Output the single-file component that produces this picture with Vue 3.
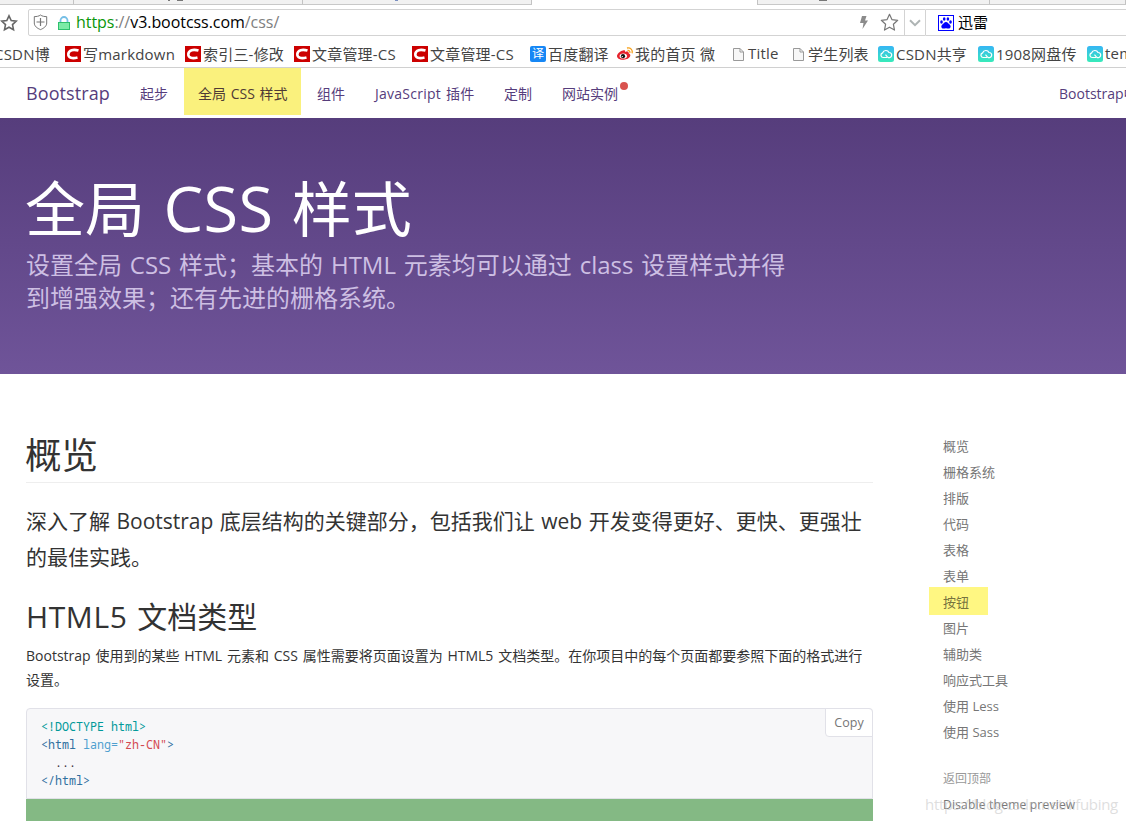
<template>
  <div class="window">
    <div class="tabs">
      <div class="tab"></div>
      <div class="tab"><i class="tail wide"></i><i class="tail bar"></i></div>
      <div class="tab"><i class="tail thin"></i></div>
      <div class="tab active"></div>
      <div class="tab"><i class="tail dash"></i></div>
      <div class="tab"></div>
    </div>

    <div class="address">
      <svg class="fav" width="18" height="18" viewBox="0 0 18 18">
        <path d="M9 1.8l2.200 4.700 5.100.6-3.800 3.500 1 5.100L9 13.200l-4.500 2.500 1-5.100L1.700 7.100l5.100-.6z" fill="none" stroke="#666" stroke-width="1.600" />
      </svg>
      <div class="url-box">
        <svg class="shield" width="15" height="17" viewBox="0 0 15 17">
          <path d="M7.500 1C5.800 2.300 3.600 2.600 1.300 2.600V9c0 3.300 3 5.300 6.200 6.600 3.200-1.300 6.200-3.300 6.200-6.600V2.600C11.400 2.600 9.200 2.300 7.500 1z" fill="none" stroke="#777" />
          <path d="M7.500 4v8M3.500 8h8" stroke="#777" stroke-width="1.200" />
        </svg>
        <svg class="lock" width="12" height="14" viewBox="0 0 12 14">
          <path d="M2.500 7V4.500a3.500 3.500 0 0 1 7 0V7" fill="none" stroke="#76bfe6" stroke-width="1.800" />
          <rect x=".5" y="6.500" width="11" height="7" fill="#7ceba6" stroke="#2ec06d" />
        </svg>
        <span class="url"><b>https</b>://<em>v3.bootcss.com</em>/css/</span>
        <svg class="bolt" width="8" height="13" viewBox="0 0 8 13">
          <path d="M2 0h4.500L5 4.500h3L2.500 13l1-6H0z" fill="#8b8b8b" />
        </svg>
        <svg class="star" width="19" height="19" viewBox="0 0 19 19">
          <path d="M9.500 1.300l2.400 5.300 5.800.7-4.300 4 1.100 5.800-5-2.900-5 2.900 1.100-5.800-4.300-4 5.800-.7z" fill="none" stroke="#777" stroke-width="1.200" stroke-linejoin="round" />
        </svg>
        <div class="drop">
          <svg width="12" height="8" viewBox="0 0 12 8">
            <path d="M1 1.200l5 5 5-5" fill="none" stroke="#aeb4b4" stroke-width="2" />
          </svg>
        </div>
      </div>
      <div class="search">
        <svg width="16" height="16" viewBox="0 0 16 16">
          <rect x=".5" y=".5" width="15" height="15" fill="#fff" stroke="#00f" />
          <g fill="#00f">
            <ellipse cx="3.500" cy="7" rx="1.300" ry="1.700" />
            <ellipse cx="6.200" cy="4" rx="1.300" ry="1.800" />
            <ellipse cx="9.900" cy="4" rx="1.300" ry="1.800" />
            <ellipse cx="12.500" cy="7" rx="1.300" ry="1.700" />
            <path d="M8 7c1.800 0 2.300 1.600 3.600 2.600 1.700 1.400 1.300 4-.9 4-1 0-1.700-.4-2.700-.4s-1.700.4-2.700.4c-2.200 0-2.600-2.600-.9-4C5.700 8.600 6.200 7 8 7z" />
          </g>
        </svg>
        <span>迅雷</span>
      </div>
    </div>

    <div class="bookmarks">
      <div v-for="(b, i) in bookmarks" :key="i" class="bookmark">
        <svg v-if="b.icon === 'csdn'" width="16" height="16" viewBox="0 0 16 16">
          <rect width="16" height="16" fill="#c00" />
          <path d="M13.500 4.600C8.500 3 3.600 4 3.300 8.200c-.2 3.800 4 4.600 9.200 3.300" fill="none" stroke="#fff" stroke-width="2.600" />
        </svg>
        <span v-else-if="b.icon === 'fanyi'" class="fanyi">译</span>
        <svg v-else-if="b.icon === 'weibo'" width="16" height="16" viewBox="0 0 16 16">
          <path d="M6 4.500c1.500-.7 2.500 0 2 1.500 2-.8 4-.5 3.700 1.300 3.300 1.300 1.600 6-4.900 6.400C2.500 14 0 12.200 0 10c0-2 3-4.800 6-5.500z" fill="#e6232d" />
          <ellipse cx="6.300" cy="10" rx="3.700" ry="2.600" fill="#fff" />
          <circle cx="6" cy="10.200" r="2.100" fill="#111" />
          <circle cx="5.300" cy="10.600" r=".7" fill="#fff" />
          <path d="M10 2c3.500-.8 6 2 5 5.300M10.500 4.500c1.500-.3 2.700.8 2.300 2.300" fill="none" stroke="#f7a11a" stroke-width="1.300" />
        </svg>
        <svg v-else-if="b.icon === 'page'" class="page" width="11" height="13" viewBox="0 0 11 13">
          <path d="M.5.500H7L10.500 4v8.500H.5zM7 .5V4h3.500" fill="#f7f7f7" stroke="#999" />
        </svg>
        <svg v-else-if="b.icon === 'cloud'" width="16" height="16" viewBox="0 0 16 16">
          <defs>
            <linearGradient id="cloud" x1="0" y1="0" x2="0" y2="1">
              <stop offset="0" stop-color="#36b5f5" />
              <stop offset="1" stop-color="#38ebb9" />
            </linearGradient>
          </defs>
          <rect width="16" height="16" rx="2.500" fill="url(#cloud)" />
          <path d="M9 11.500H5a2.400 2.400 0 0 1-.3-4.700A3.400 3.400 0 0 1 11 6.500a2.600 2.600 0 1 1-1.300 4.800L7.500 8.700" fill="none" stroke="#fff" stroke-width="1.200" />
        </svg>
        <span class="label">{{ b.text }}</span>
      </div>
    </div>

    <nav class="navbar">
      <a class="brand">Bootstrap</a>
      <a v-for="item in nav" :key="item" :class="{ current: item === '全局 CSS 样式', dotted: item === '网站实例' }">
        {{ item }}
      </a>
      <a class="site">Bootstrap中文网</a>
    </nav>

    <header class="hero">
      <h1>全局 <span>CSS</span> 样式</h1>
      <p>设置全局 CSS 样式；基本的 HTML 元素均可以通过 class 设置样式并得<br>到增强效果；还有先进的栅格系统。</p>
    </header>

    <div class="content">
      <main>
        <h2>概览</h2>
        <p class="lead">深入了解 Bootstrap 底层结构的关键部分，包括我们让 web 开发变得更好、更快、更强壮<br>的最佳实践。</p>
        <h3><span>HTML5</span> 文档类型</h3>
        <p class="text">Bootstrap 使用到的某些 HTML 元素和 CSS 属性需要将页面设置为 HTML5 文档类型。在你项目中的每个页面都要参照下面的格式进行<br>设置。</p>
        <div class="code">
          <button>Copy</button>
          <pre><span class="cp">&lt;!DOCTYPE html&gt;</span>
<span class="nt">&lt;html</span> <span class="na">lang=</span><span class="s">"zh-CN"</span><span class="nt">&gt;</span>
  ...
<span class="nt">&lt;/html&gt;</span></pre>
        </div>
        <div class="green"></div>
      </main>

      <aside>
        <a v-for="item in side" :key="item"><span :class="{ marked: item === '按钮' }">{{ item }}</span></a>
        <a class="top">返回顶部</a>
        <a class="theme">Disable theme preview</a>
      </aside>
    </div>
    <div class="watermark">https://blog.csdn.net/lifubing</div>
  </div>
</template>

<script setup>
const bookmarks = [
  { icon: '', text: 'CSDN博' },
  { icon: 'csdn', text: '写markdown' },
  { icon: 'csdn', text: '索引三-修改' },
  { icon: 'csdn', text: '文章管理-CS' },
  { icon: 'csdn', text: '文章管理-CS' },
  { icon: 'fanyi', text: '百度翻译' },
  { icon: 'weibo', text: '我的首页 微' },
  { icon: 'page', text: 'Title' },
  { icon: 'page', text: '学生列表' },
  { icon: 'cloud', text: 'CSDN共亨' },
  { icon: 'cloud', text: '1908网盘传' },
  { icon: 'cloud', text: 'templates' }
]

const nav = ['起步', '全局 CSS 样式', '组件', 'JavaScript 插件', '定制', '网站实例']

const side = ['概览', '栅格系统', '排版', '代码', '表格', '表单', '按钮', '图片', '辅助类', '响应式工具', '使用 Less', '使用 Sass']
</script>

<style>
body {
  margin: 0;
  background: #fff;
}
</style>

<style scoped>
* {
  box-sizing: border-box;
}

.window {
  position: relative;
  width: 1126px;
  height: 823px;
  overflow: hidden;
  background: #fff;
  color: #333;
  font-family: "Open Sans", "Noto Sans CJK SC", sans-serif;
  font-size: 14px;
  white-space: nowrap;
}

h1, h2, h3, p, pre {
  margin: 0;
  font-weight: 400;
}

/* browser chrome */
.tabs {
  display: grid;
  grid-template-columns: 74px 229px 229px 226px 232px 136px;
  height: 5px;
}

.tab {
  display: flex;
  background: #f1f1f1;
  border-right: 1px solid #c3c3c3;
  border-bottom: 1px solid #c8c8c8;
}

.tab.active {
  background: #fff;
  border-bottom: 0;
}

.tail {
  height: 1px;
  background: #777;
}

.tail.wide {
  width: 2px;
  margin-left: 94px;
}

.tail.bar {
  width: 6px;
  margin-left: 7px;
}

.tail.thin {
  width: 3px;
  margin-left: 92px;
  background: #7a8fc0;
}

.tail.dash {
  width: 8px;
  margin-left: 61px;
}

.address {
  display: flex;
  height: 31px;
  padding-top: 4px;
}

.fav {
  flex: none;
  margin: 5px 10px 0 0;
}

.url-box {
  display: flex;
  align-items: center;
  flex: none;
  width: 898px;
  height: 27px;
  padding-left: 4px;
  border: 1px solid #d3d3d3;
  border-radius: 2px 0 0 2px;
}

.lock {
  margin: 0 6px 0 10px;
}

.url {
  width: 784px;
  color: #808080;
  font-size: 16px;
  line-height: 25px;
  letter-spacing: -0.05px;
}

.url b {
  color: #0a960a;
  font-weight: 400;
}

.url em {
  color: #000;
  font-style: normal;
}

.star {
  margin-left: 12px;
}

.drop {
  display: flex;
  align-items: center;
  justify-content: center;
  width: 21px;
  height: 25px;
  margin-left: 5px;
  border-left: 1px solid #d3d3d3;
}

.bolt, .star, .shield, .lock, .url, .drop {
  flex: none;
}

.search {
  display: flex;
  align-items: center;
  flex: 1;
  height: 27px;
  padding-left: 12px;
  border: solid #d3d3d3;
  border-width: 1px 0;
  color: #000;
  font-size: 15px;
}

.search span {
  margin-left: 4px;
  line-height: 22px;
  padding-bottom: 2px;
}

.bookmarks {
  display: grid;
  grid-template-columns: 68px 120px 109px 118px 118px 87px 116px 60px 85px 100px 109px 60px;
  height: 32px;
  margin-left: -3px;
  border-bottom: 1px solid #d0d0d0;
}

.bookmark {
  display: flex;
  align-items: center;
  height: 36px;
  color: #444;
  font-size: 15px;
  letter-spacing: 0.2px;
}

.bookmark svg {
  flex: none;
}

.bookmark .label {
  margin-left: 2px;
  padding-bottom: 2px;
}

.bookmark:first-child .label {
  margin-left: -3px;
}

.bookmark .page + .label {
  margin-left: 4px;
}

.fanyi {
  width: 16px;
  height: 16px;
  border-radius: 2px;
  background: #1687f5;
  color: #fff;
  font-size: 12px;
  line-height: 15px;
  text-align: center;
}

/* page */
.navbar {
  display: grid;
  grid-template-columns: 99px 59px 118px 58px 129px 58px 497px 110px;
  height: 50px;
  padding-left: 26px;
  color: #563d7c;
  line-height: 51px;
  word-spacing: 1px;
}

.navbar a {
  height: 47px;
  padding-left: 15px;
}

.navbar a:nth-child(5) {
  letter-spacing: 0.25px;
}

.navbar .brand {
  padding-left: 0;
  font-size: 18px;
  letter-spacing: 0.1px;
}

.navbar .current {
  width: 117px;
  padding-left: 14px;
  background: #faf17d;
  color: #4f3a35;
}

.navbar .dotted::after {
  content: "";
  display: inline-block;
  width: 8px;
  height: 8px;
  margin-left: 2px;
  border-radius: 50%;
  background: #d9534f;
  vertical-align: 9px;
}

.hero {
  height: 256px;
  padding: 55px 0 0 26px;
  background: linear-gradient(#563d7c, #6f5499);
  color: #cdbfe3;
}

.hero h1 {
  height: 75px;
  margin-left: -1px;
  color: #fff;
  font-size: 60px;
  line-height: 73px;
  word-spacing: 3px;
}

.hero h1 span {
  font-size: 63px;
  line-height: 1;
  letter-spacing: 0.3px;
}

.hero p {
  font-size: 24px;
  line-height: 33px;
  word-spacing: 1.6px;
}

.content {
  display: grid;
  grid-template-columns: 847px 1fr;
  column-gap: 70px;
  padding: 56px 0 0 26px;
}

h2 {
  height: 53px;
  border-bottom: 1px solid #eee;
  font-size: 36.5px;
  line-height: 50px;
  text-indent: -1px;
}

.lead {
  height: 72px;
  margin-top: 20px;
  font-size: 21px;
  line-height: 36px;
  word-spacing: 1px;
}

h3 {
  height: 42px;
  margin-top: 20px;
  font-size: 30px;
  line-height: 43px;
  word-spacing: 2px;
}

h3 span {
  letter-spacing: 0.6px;
}

.text {
  margin-top: 7px;
  line-height: 24px;
  word-spacing: 1.15px;
}

.code {
  position: relative;
  height: 91px;
  margin-top: 16px;
  border: 1px solid #e1e1e8;
  border-radius: 4px 4px 0 0;
  background: #f7f7f9;
}

.code button {
  position: absolute;
  top: -1px;
  right: -1px;
  width: 48px;
  height: 29px;
  padding: 0;
  border: 1px solid #e1e1e8;
  border-radius: 0 4px 0 4px;
  background: #fff;
  color: #767676;
  font-family: inherit;
  font-size: 12.5px;
}

pre {
  padding: 9px 14px;
  font-family: "Noto Sans Mono", "DejaVu Sans Mono", monospace;
  font-size: 11.68px;
  line-height: 18px;
}

.cp {
  color: #099;
}

.nt {
  color: #2f6f9f;
}

.na {
  color: #4f9fcf;
}

.s {
  color: #d44950;
}

.green {
  height: 22px;
  background: #84b984;
}

aside {
  display: flex;
  flex-direction: column;
  padding-top: 3px;
  color: #767676;
  font-size: 13px;
  line-height: 26px;
}

aside a {
  height: 26px;
}

.marked {
  display: block;
  width: 59px;
  height: 28px;
  margin: -2px 0 0 -14px;
  padding: 2px 0 0 14px;
  background: #fff782;
  color: #77733f;
}

aside .top {
  margin-top: 21px;
  color: #999;
  font-size: 12px;
}

aside .theme {
  font-size: 12px;
  letter-spacing: 0.22px;
}

.watermark {
  position: absolute;
  top: 793px;
  left: 925px;
  color: rgba(190, 190, 190, 0.5);
  font-size: 15px;
  line-height: 22px;
  letter-spacing: -0.32px;
}
</style>
